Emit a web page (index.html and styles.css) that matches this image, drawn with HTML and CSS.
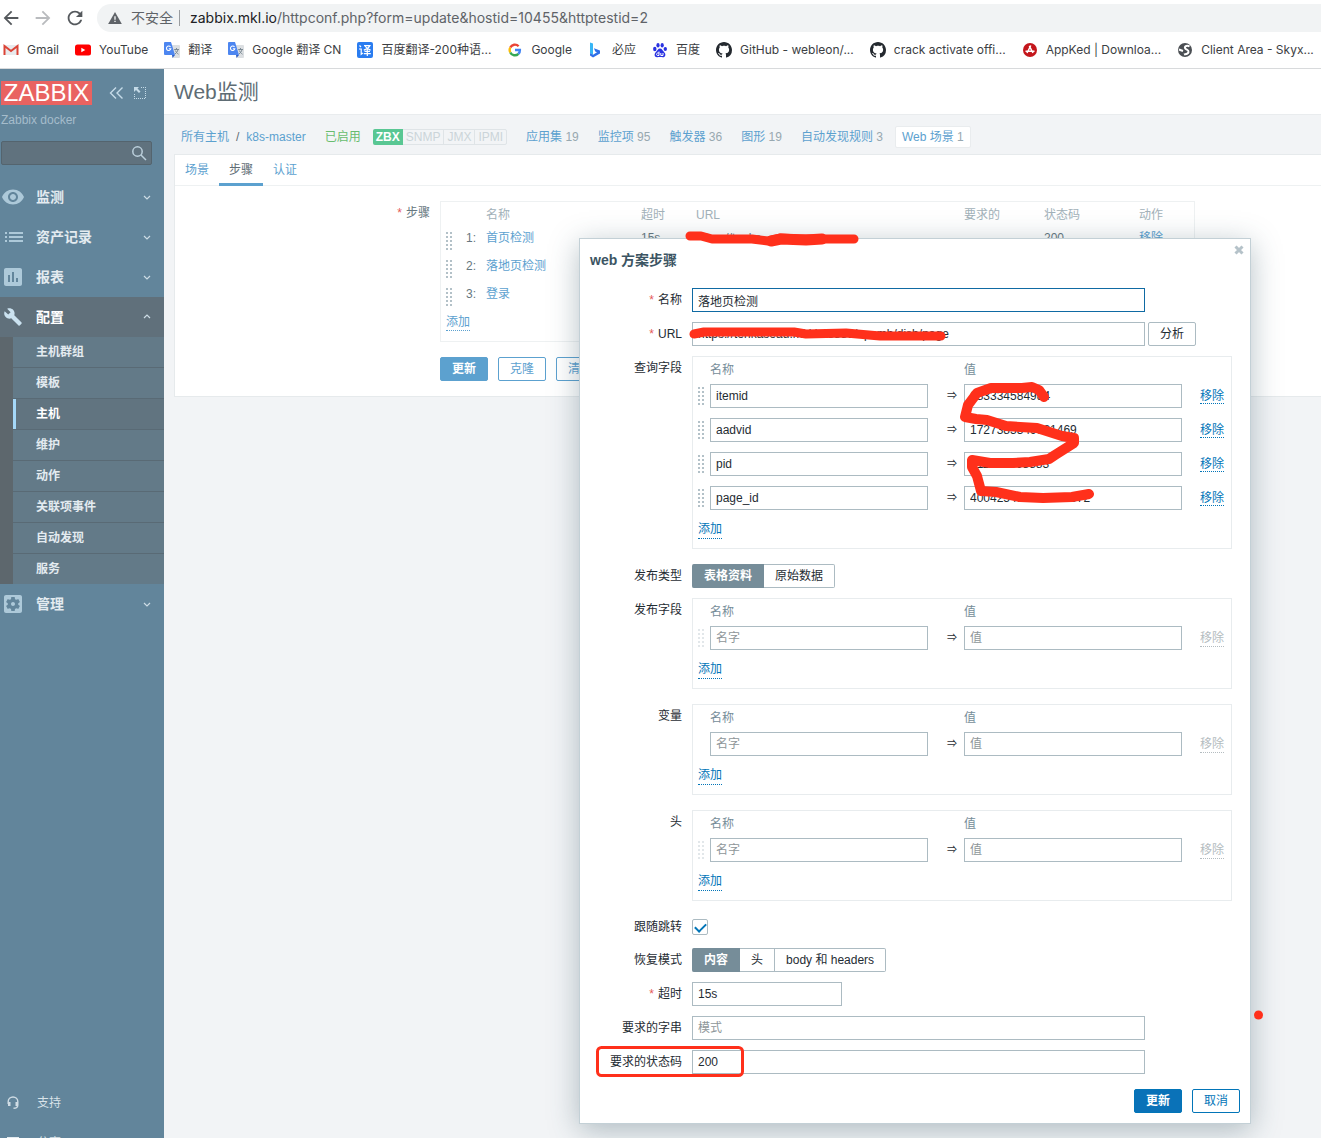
FILE: index.html
```html
<!DOCTYPE html>
<html lang="zh-CN">
<head>
<meta charset="utf-8">
<title>Web监测</title>
<link rel="stylesheet" href="styles.css">
</head>
<body>
<svg class="sprite" aria-hidden="true">
  <symbol id="chevron" viewBox="0 0 8 8"><path d="M1 3l3 3 3-3" fill="none" stroke="currentColor" stroke-width="1.2"/></symbol>
  <symbol id="github" viewBox="0 0 16 16"><path fill="#24292f" d="M8 0C3.58 0 0 3.58 0 8c0 3.54 2.29 6.53 5.47 7.59.4.07.55-.17.55-.38 0-.19-.01-.82-.01-1.49-2.01.37-2.53-.49-2.69-.94-.09-.23-.48-.94-.82-1.13-.28-.15-.68-.52-.01-.53.63-.01 1.08.58 1.23.82.72 1.21 1.87.87 2.33.66.07-.52.28-.87.51-1.07-1.78-.2-3.64-.89-3.64-3.95 0-.87.31-1.59.82-2.15-.08-.2-.36-1.02.08-2.12 0 0 .67-.21 2.2.82.64-.18 1.32-.27 2-.27s1.36.09 2 .27c1.53-1.04 2.2-.82 2.2-.82.44 1.1.16 1.92.08 2.12.51.56.82 1.27.82 2.15 0 3.07-1.87 3.75-3.65 3.95.29.25.54.73.54 1.48 0 1.07-.01 1.93-.01 2.2 0 .21.15.46.55.38A8.01 8.01 0 0 0 16 8c0-4.42-3.58-8-8-8z"/></symbol>
  <symbol id="gtranslate" viewBox="0 0 16 16"><path fill="#dcdfe2" d="M6 3h9a1 1 0 0 1 1 1v11a1 1 0 0 1-1 1H9z"/><path fill="#4d86f0" d="M1 0h6l4 13H1a1 1 0 0 1-1-1V1a1 1 0 0 1 1-1z"/><path fill="#2f5fc4" d="M8 13h3l-2.500 3z"/><path fill="none" stroke="#fff" stroke-width="1.1" d="M6.500 5A2.200 2.200 0 1 0 6.800 6.800H4.800"/><path fill="none" stroke="#7c8a94" d="M10.200 7.500H15M12.500 6v1.500M14 7.500c-.5 2-1.600 3.500-3 4.500M11.300 8.500c.8 1.800 1.800 2.800 3.200 3.700"/></symbol>
</svg>

<header class="browser">
  <div class="toolbar">
    <button class="nav-btn" aria-label="后退"><svg viewBox="0 0 24 24"><path d="M20 11H7.830l5.590-5.590L12 4l-8 8 8 8 1.410-1.410L7.830 13H20v-2z"/></svg></button>
    <button class="nav-btn nav-off" aria-label="前进"><svg viewBox="0 0 24 24"><path d="M4 11h12.170l-5.590-5.590L12 4l8 8-8 8-1.410-1.410L16.170 13H4v-2z"/></svg></button>
    <button class="nav-btn" aria-label="刷新"><svg viewBox="0 0 24 24"><path d="M17.650 6.350C16.200 4.900 14.210 4 12 4c-4.420 0-7.990 3.580-7.990 8s3.570 8 7.990 8c3.730 0 6.840-2.550 7.730-6h-2.080c-.82 2.330-3.040 4-5.650 4-3.310 0-6-2.690-6-6s2.690-6 6-6c1.660 0 3.140.69 4.220 1.780L13 11h7V4l-2.350 2.350z"/></svg></button>
    <div class="omnibox">
      <svg class="warn" viewBox="0 0 16 14"><path fill="#5f6368" d="M8 0l8 14H0z"/><path fill="#f1f3f4" d="M7.200 5h1.600v4H7.200zM7.200 10.200h1.600v1.600H7.200z"/></svg>
      <span class="insecure">不安全</span>
      <span class="url"><span class="host">zabbix.mkl.io</span>/httpconf.php?form=update&amp;hostid=10455&amp;httptestid=2</span>
    </div>
  </div>
  <nav class="bookmarks">
    <a href="#"><svg viewBox="0 0 16 16"><path fill="#e8eaed" d="M1 3h14v10H1z"/><path fill="none" stroke="#db4437" stroke-width="2" d="M1.500 13V4L8 9l6.500-5v9"/></svg>Gmail</a>
    <a href="#"><svg viewBox="0 0 16 16"><rect y="2.500" width="16" height="11" rx="2.500" fill="#f00"/><path fill="#fff" d="M6.300 5.700v4.600l4-2.300z"/></svg>YouTube</a>
    <a href="#"><svg><use href="#gtranslate"/></svg>翻译</a>
    <a href="#"><svg><use href="#gtranslate"/></svg>Google 翻译 CN</a>
    <a href="#"><svg viewBox="0 0 16 16"><rect width="16" height="16" rx="2" fill="#2a7cf0"/><path fill="none" stroke="#fff" stroke-width="1.200" d="M2.500 3.500l1.500 1.500M2 7h2.200v5.300l1.600-1.300M7 3.600h6c-1.300 2.600-3.200 3.800-6.200 4.500M8.200 4.200c1.200 2 2.800 3.200 5.400 3.900M10.300 7.500v6.500M7.500 9.300H13M6.800 11.600h7"/></svg>百度翻译-200种语...</a>
    <a href="#"><svg viewBox="0 0 16 16"><g fill="none" stroke-width="2.400"><path stroke="#ea4335" d="M3.300 5.600a5 5 0 0 1 8.300-1.300"/><path stroke="#fbbc05" d="M3.300 10.400a5 5 0 0 1 0-4.800"/><path stroke="#34a853" d="M11.400 11.800a5 5 0 0 1-8.100-1.400"/><path stroke="#4285f4" d="M8 8h4.900a5 5 0 0 1-1.500 3.800"/></g></svg>Google</a>
    <a href="#"><svg viewBox="0 0 16 16"><path fill="#37b6f5" d="M2 .5l3 1V13l-3-2z"/><path fill="#2f6fe8" d="M2 11l3 1.700 4-2.400-1.800-.9L6 6.200l6 2.200v3L5 15.500 2 13.600z"/></svg>必应</a>
    <a href="#"><svg viewBox="0 0 16 16"><g fill="#2932e1"><ellipse cx="2.800" cy="7" rx="1.700" ry="2.200"/><ellipse cx="6" cy="3.200" rx="1.600" ry="2.200"/><ellipse cx="10.200" cy="3.200" rx="1.600" ry="2.200"/><ellipse cx="13.300" cy="7" rx="1.700" ry="2.100"/><path d="M8 6.500c2 0 2.500 2 4 3.400 2.700 2.500 1 5.600-1.200 5.300-2-.3-3.600-.3-5.600 0C2.800 15.500 1.500 12.300 4 10c1.500-1.400 2-3.500 4-3.500z"/></g><path fill="none" stroke="#fff" d="M7 9.500v4M7 11H5.500c-1.200.3-1.200 2.500 0 2.500H7M8.800 11v2.500h2.200V11"/></svg>百度</a>
    <a href="#"><svg><use href="#github"/></svg>GitHub - webleon/...</a>
    <a href="#"><svg><use href="#github"/></svg>crack activate offi...</a>
    <a href="#"><svg viewBox="0 0 16 16"><circle cx="8" cy="8" r="7" fill="#c4161c"/><path fill="none" stroke="#fff" stroke-width="1.500" d="M8.800 3.500L5 11M7.300 3.800L11 11M3.500 9.200h9"/></svg>AppKed | Downloa...</a>
    <a href="#"><svg viewBox="0 0 16 16"><circle cx="8" cy="8" r="7" fill="#4b4f54"/><path fill="none" stroke="#fff" stroke-width="2" d="M12.500 4.500C10.500 3 7.500 4 8 6s4 1.500 3.500 4-3.500 2-4.500 2.500M2 7.500l4 1.500"/></svg>Client Area - Skyx...</a>
  </nav>
</header>

<div class="app">
  <aside class="sidebar">
    <div class="brand">
      <a class="logo" href="#">ZABBIX</a>
      <button class="icon-btn" aria-label="收起"><svg width="16" height="16" viewBox="0 0 16 16"><path fill="none" stroke="#c5dbe8" stroke-width="1.400" d="M8 2.500L2.500 8 8 13.500M14.500 2.500L9 8l5.500 5.500"/></svg></button>
      <button class="icon-btn" aria-label="隐藏"><svg width="14" height="14" viewBox="0 0 14 14"><path fill="#c5dbe8" d="M1 1h5L4.500 2.500l3 3-1.500 1.500-3-3L1 6z"/><path fill="none" stroke="#c5dbe8" stroke-dasharray="1 1" d="M8 1.500h5M12.500 3v10M1.500 8v5M3 12.500h9"/></svg></button>
    </div>
    <div class="server">Zabbix docker</div>
    <div class="search"><input type="text" aria-label="搜索"><svg width="16" height="16" viewBox="0 0 16 16"><g fill="none" stroke="#bcd0dc" stroke-width="1.500"><circle cx="6.500" cy="6.500" r="4.700"/><path d="M10 10l5 5"/></g></svg></div>
    <nav>
      <ul class="menu">
        <li><a href="#"><svg class="mi" viewBox="0 0 24 24"><path d="M12 4.500C7 4.500 2.730 7.610 1 12c1.730 4.390 6 7.500 11 7.500s9.270-3.110 11-7.500c-1.730-4.390-6-7.500-11-7.500zM12 17c-2.760 0-5-2.240-5-5s2.240-5 5-5 5 2.240 5 5-2.240 5-5 5zm0-8c-1.660 0-3 1.340-3 3s1.340 3 3 3 3-1.340 3-3-1.340-3-3-3z"/></svg>监测<svg class="chev"><use href="#chevron"/></svg></a></li>
        <li><a href="#"><svg class="mi" viewBox="0 0 24 24"><path d="M4 7h2v2H4zM8 7h14v2H8zM4 11h2v2H4zM8 11h14v2H8zM4 15h2v2H4zM8 15h14v2H8z"/></svg>资产记录<svg class="chev"><use href="#chevron"/></svg></a></li>
        <li><a href="#"><svg class="mi" viewBox="0 0 24 24"><path d="M19 3H5c-1.100 0-2 .9-2 2v14c0 1.100.9 2 2 2h14c1.100 0 2-.9 2-2V5c0-1.100-.9-2-2-2zM9 17H7v-7h2v7zm4 0h-2V7h2v10zm4 0h-2v-4h2v4z"/></svg>报表<svg class="chev"><use href="#chevron"/></svg></a></li>
        <li class="open"><a href="#"><svg class="mi" viewBox="-3 -3 30 30"><path d="M22.700 19l-9.100-9.100c.9-2.300.4-5-1.500-6.900-2-2-5-2.400-7.400-1.300L9 6 6 9 1.600 4.700C.4 7.100.9 10.100 2.900 12.100c1.900 1.900 4.600 2.400 6.900 1.500l9.100 9.100c.4.4 1 .4 1.400 0l2.300-2.300c.5-.4.5-1.100.1-1.400z"/></svg>配置<svg class="chev up"><use href="#chevron"/></svg></a>
          <ul class="submenu">
            <li><a href="#">主机群组</a></li>
            <li><a href="#">模板</a></li>
            <li class="current"><a href="#">主机</a></li>
            <li><a href="#">维护</a></li>
            <li><a href="#">动作</a></li>
            <li><a href="#">关联项事件</a></li>
            <li><a href="#">自动发现</a></li>
            <li><a href="#">服务</a></li>
          </ul>
        </li>
        <li><a href="#"><svg class="mi" viewBox="0 0 24 24"><path fill-rule="evenodd" d="M12 10c-1.100 0-2 .9-2 2s.9 2 2 2 2-.9 2-2-.9-2-2-2zm7-7H5c-1.110 0-2 .9-2 2v14c0 1.100.89 2 2 2h14c1.110 0 2-.9 2-2V5c0-1.100-.89-2-2-2zm-1.750 9c0 .23-.02.46-.05.68l1.480 1.160c.13.11.17.3.08.45l-1.400 2.420c-.09.15-.27.21-.43.15l-1.740-.7c-.36.28-.76.51-1.180.69l-.26 1.850c-.03.17-.18.3-.35.3h-2.800c-.17 0-.32-.13-.35-.29l-.26-1.850c-.43-.18-.82-.41-1.180-.69l-1.740.7c-.16.06-.34 0-.43-.15l-1.400-2.420c-.09-.15-.05-.34.08-.45l1.480-1.160c-.03-.23-.05-.46-.05-.69 0-.23.02-.46.05-.68l-1.480-1.160c-.13-.11-.17-.3-.08-.45l1.400-2.420c.09-.15.27-.21.43-.15l1.740.7c.36-.28.76-.51 1.180-.69l.26-1.850c.03-.17.18-.3.35-.3h2.800c.17 0 .32.13.35.29l.26 1.850c.43.18.82.41 1.180.69l1.740-.7c.16-.06.34 0 .43.15l1.400 2.420c.09.15.05.34-.08.45l-1.480 1.160c.03.23.05.46.05.69z"/></svg>管理<svg class="chev"><use href="#chevron"/></svg></a></li>
      </ul>
    </nav>
    <nav class="foot">
      <a href="#"><svg width="12" height="14" viewBox="0 0 12 14"><path fill="none" stroke="#cfdce4" stroke-width="1.400" d="M1.200 8V5.500a4.800 4.500 0 0 1 9.600 0V9c0 2-1.500 3.300-4.300 3.300"/><path fill="#cfdce4" d="M1 6h2.500v4H1zM8.500 6H11v4H8.500z"/></svg>支持</a>
      <a href="#"><svg width="12" height="12" viewBox="0 0 12 12"><path fill="#e3ebf0" d="M0 0h12v12H0z"/></svg>分享</a>
    </nav>
  </aside>

  <main class="main">
    <h1 class="page-title">Web监测</h1>
    <nav class="crumbs">
      <span class="path"><a href="#">所有主机</a><span>/</span><a href="#">k8s-master</a></span>
      <span class="enabled">已启用</span>
      <span class="tags"><span class="tag on">ZBX</span><span class="tag">SNMP</span><span class="tag">JMX</span><span class="tag">IPMI</span></span>
      <span><a href="#">应用集</a> 19</span>
      <span><a href="#">监控项</a> 95</span>
      <span><a href="#">触发器</a> 36</span>
      <span><a href="#">图形</a> 19</span>
      <span><a href="#">自动发现规则</a> 3</span>
      <span class="here"><a href="#">Web 场景</a> 1</span>
    </nav>
    <section class="panel">
      <nav class="tabs"><a href="#">场景</a><a class="active" href="#">步骤</a><a href="#">认证</a></nav>
      <div class="steps-form">
        <div class="steps-label"><span class="req">*</span>步骤</div>
        <div class="steps-box">
          <table class="steps">
            <colgroup><col class="c-drag"><col class="c-num"><col class="c-name"><col class="c-time"><col class="c-url"><col class="c-need"><col class="c-code"><col></colgroup>
            <thead><tr><th></th><th></th><th>名称</th><th>超时</th><th>URL</th><th>要求的</th><th>状态码</th><th>动作</th></tr></thead>
            <tbody>
              <tr><td><span class="grip"></span></td><td class="num">1:</td><td><a href="#">首页检测</a></td><td>15s</td><td>https://tenka</td><td></td><td>200</td><td><a class="dotted" href="#">移除</a></td></tr>
              <tr><td><span class="grip"></span></td><td class="num">2:</td><td><a href="#">落地页检测</a></td><td></td><td></td><td></td><td></td><td></td></tr>
              <tr><td><span class="grip"></span></td><td class="num">3:</td><td><a href="#">登录</a></td><td></td><td></td><td></td><td></td><td></td></tr>
            </tbody>
          </table>
          <a class="dotted add" href="#">添加</a>
        </div>
        <div class="actions">
          <button class="btn solid">更新</button><button class="btn">克隆</button><button class="btn">清除</button>
        </div>
      </div>
    </section>
  </main>
</div>

<div class="dialog" role="dialog" aria-labelledby="dlg-title">
  <button class="close" aria-label="关闭"><svg width="10" height="10" viewBox="0 0 10 10"><path stroke="currentColor" stroke-width="3" d="M1.500 1.500l7 7M8.500 1.500l-7 7"/></svg></button>
  <h2 id="dlg-title">web 方案步骤</h2>
  <form class="form">
    <label for="name"><span class="req">*</span>名称</label>
    <div><input id="name" class="wide focus" type="text" value="落地页检测"></div>

    <label for="url"><span class="req">*</span>URL</label>
    <div class="inline"><input id="url" class="wide" type="text" value="https://tenkaseau.mkl.io/8888/opsmb/dish/page"><button type="button" class="parse">分析</button></div>

    <div class="lbl">查询字段</div>
    <div class="pairs">
      <table>
        <thead><tr><th class="p-drag"></th><th class="p-in">名称</th><th class="p-arrow"></th><th class="p-in">值</th><th></th></tr></thead>
        <tbody>
          <tr><td><span class="grip"></span></td><td><input type="text" aria-label="名称" value="itemid"></td><td class="arrow">⇒</td><td><input type="text" aria-label="值" value="683334584984"></td><td class="rm"><a class="dotted" href="#">移除</a></td></tr>
          <tr><td><span class="grip"></span></td><td><input type="text" aria-label="名称" value="aadvid"></td><td class="arrow">⇒</td><td><input type="text" aria-label="值" value="1727383349981469"></td><td class="rm"><a class="dotted" href="#">移除</a></td></tr>
          <tr><td><span class="grip"></span></td><td><input type="text" aria-label="名称" value="pid"></td><td class="arrow">⇒</td><td><input type="text" aria-label="值" value="411988868883"></td><td class="rm"><a class="dotted" href="#">移除</a></td></tr>
          <tr><td><span class="grip"></span></td><td><input type="text" aria-label="名称" value="page_id"></td><td class="arrow">⇒</td><td><input type="text" aria-label="值" value="400425483158538872"></td><td class="rm"><a class="dotted" href="#">移除</a></td></tr>
        </tbody>
      </table>
      <a class="dotted add" href="#">添加</a>
    </div>

    <div class="lbl">发布类型</div>
    <div class="seg">
      <input type="radio" name="post" id="post-form" checked><label for="post-form">表格资料</label>
      <input type="radio" name="post" id="post-raw"><label for="post-raw">原始数据</label>
    </div>

    <div class="lbl">发布字段</div>
    <div class="pairs">
      <table>
        <thead><tr><th class="p-drag"></th><th class="p-in">名称</th><th class="p-arrow"></th><th class="p-in">值</th><th></th></tr></thead>
        <tbody><tr><td><span class="grip faint"></span></td><td><input type="text" aria-label="名称" placeholder="名字"></td><td class="arrow">⇒</td><td><input type="text" aria-label="值" placeholder="值"></td><td class="rm"><button type="button" class="dotted" disabled>移除</button></td></tr></tbody>
      </table>
      <a class="dotted add" href="#">添加</a>
    </div>

    <div class="lbl">变量</div>
    <div class="pairs">
      <table>
        <thead><tr><th class="p-drag"></th><th class="p-in">名称</th><th class="p-arrow"></th><th class="p-in">值</th><th></th></tr></thead>
        <tbody><tr><td></td><td><input type="text" aria-label="名称" placeholder="名字"></td><td class="arrow">⇒</td><td><input type="text" aria-label="值" placeholder="值"></td><td class="rm"><button type="button" class="dotted" disabled>移除</button></td></tr></tbody>
      </table>
      <a class="dotted add" href="#">添加</a>
    </div>

    <div class="lbl">头</div>
    <div class="pairs">
      <table>
        <thead><tr><th class="p-drag"></th><th class="p-in">名称</th><th class="p-arrow"></th><th class="p-in">值</th><th></th></tr></thead>
        <tbody><tr><td><span class="grip faint"></span></td><td><input type="text" aria-label="名称" placeholder="名字"></td><td class="arrow">⇒</td><td><input type="text" aria-label="值" placeholder="值"></td><td class="rm"><button type="button" class="dotted" disabled>移除</button></td></tr></tbody>
      </table>
      <a class="dotted add" href="#">添加</a>
    </div>

    <label class="check-label" for="follow">跟随跳转</label>
    <div class="check"><input id="follow" type="checkbox" checked></div>

    <div class="lbl">恢复模式</div>
    <div class="seg">
      <input type="radio" name="mode" id="mode-body" checked><label for="mode-body">内容</label>
      <input type="radio" name="mode" id="mode-head"><label for="mode-head">头</label>
      <input type="radio" name="mode" id="mode-both"><label for="mode-both">body 和 headers</label>
    </div>

    <label for="timeout"><span class="req">*</span>超时</label>
    <div><input id="timeout" class="short" type="text" value="15s"></div>

    <label for="required">要求的字串</label>
    <div><input id="required" class="wide" type="text" placeholder="模式"></div>

    <label for="codes">要求的状态码</label>
    <div><input id="codes" class="wide" type="text" value="200"></div>
  </form>
  <div class="dialog-foot"><button class="btn solid">更新</button><button class="btn">取消</button></div>

  <svg class="marks" viewBox="579 238 672 887" preserveAspectRatio="xMinYMin meet" aria-hidden="true">
    <g fill="none" stroke="#ff301b" stroke-width="10" stroke-linecap="round" stroke-linejoin="round">
      <path stroke-width="9" d="M690 236L701 236L712 239L752 239L768 241L780 238L800 239L822 239L854 239"/>
      <path stroke-width="11" d="M771 241L781 239L806 240L822 239"/>
      <path stroke-width="9" d="M694 334L704 332L724 332L794 332L806 334L846 333L880 336L941 336"/>
      <path d="M1044 397L1039 390L1032 387L1022 388L991 388L977 393L968 405L965 417L976 419L987 420L1006 426L1037 428L1062 436L1074 438L1074 443L1055 455L1049 459L1030 462L1013 463L990 463L972 460L972 467L977 476L981 491L996 492L1020 497L1043 498L1072 497L1089 494"/>
    </g>
    <rect x="597.500" y="1047.500" width="145" height="28" rx="4" fill="none" stroke="#ff301b" stroke-width="3"/>
    <circle cx="1258.500" cy="1015" r="4.500" fill="#ff301b"/>
  </svg>
</div>
</body>
</html>
```
FILE: styles.css
```css
* { box-sizing: border-box; }
body {
  margin: 0;
  height: 100vh;
  display: flex;
  flex-direction: column;
  position: relative;
  overflow: hidden;
  background: #f2f4f6;
  color: #1f2c33;
  font: 12px/16px "Liberation Sans", "Noto Sans CJK SC", sans-serif;
}
a { color: #5ca1cf; text-decoration: none; }
button, input { font: inherit; color: inherit; }
button { cursor: pointer; padding: 0; background: none; border: 0; }
ul { list-style: none; margin: 0; padding: 0; }
.sprite { display: none; }

/* browser chrome */
.browser {
  flex: none;
  background: #fff;
  border-bottom: 1px solid #d8dadc;
  padding-top: 4px;
  font-family: Inter, "Noto Sans CJK SC", sans-serif;
}
.toolbar { display: flex; align-items: center; height: 28px; }
.nav-btn { width: 32px; height: 22px; flex: none; text-align: left; }
.nav-btn svg { display: block; width: 22px; height: 22px; fill: #55595d; }
.nav-off svg { fill: #b9bbbe; }
.omnibox {
  flex: 1;
  min-width: 0;
  height: 28px;
  margin-left: 1px;
  padding-left: 11px;
  display: flex;
  align-items: center;
  background: #f1f3f4;
  border-radius: 14px 0 0 14px;
  font-size: 14px;
  white-space: nowrap;
}
.warn { width: 14px; height: 12px; margin-right: 9px; }
.insecure { color: #5f6368; padding-right: 6px; border-right: 1px solid #9a9da0; margin-right: 10px; }
.url { color: #5f6368; }
.host { color: #202124; }
.bookmarks {
  display: flex;
  gap: 16px;
  height: 36px;
  align-items: center;
  padding-left: 3px;
  white-space: nowrap;
}
.bookmarks a { display: flex; gap: 8px; align-items: center; color: #3c4043; }
.bookmarks svg { width: 16px; height: 16px; flex: none; }

/* application shell */
.app { flex: 1; min-height: 0; display: flex; }
.sidebar {
  width: 164px;
  flex: none;
  overflow: hidden;
  display: flex;
  flex-direction: column;
  background: #62859b;
  padding-top: 12px;
}
.brand { display: flex; align-items: center; height: 24px; padding-left: 1px; }
.logo {
  width: 91px;
  height: 24px;
  margin-right: 16px;
  background: #e96361;
  color: #fff;
  font-size: 24px;
  line-height: 24px;
  text-align: center;
}
.icon-btn { margin-right: 9px; height: 16px; }
.icon-btn svg { display: block; }
.server { color: #a5bccb; padding: 7px 0 13px 1px; }
.search {
  display: flex;
  align-items: center;
  height: 24px;
  margin: 0 12px 12px 1px;
  padding-right: 4px;
  background: #60727e;
  border: 1px solid #54646e;
  border-radius: 2px;
}
.search input { flex: 1; min-width: 0; border: 0; background: none; outline: 0; }
.menu > li > a {
  display: flex;
  align-items: center;
  height: 40px;
  padding: 0 13px 0 1px;
  font-size: 14px;
  font-weight: 700;
  color: #e3ebf0;
}
.mi { width: 24px; height: 24px; margin-right: 11px; fill: #adc9d9; }
.chev { width: 8px; height: 8px; margin-left: auto; color: #cddce5; }
.chev.up { transform: rotate(180deg); }
.menu > .open > a { background: #60707b; color: #fff; }
.open .mi { fill: #cbe2f0; }
.submenu { border-left: 13px solid #5d676d; }
.submenu li { background: #637a88; border-bottom: 1px solid #596a75; }
.submenu li:last-child { border-bottom: 0; }
.submenu a {
  display: block;
  padding: 7px 0 7px 23px;
  color: #e3ebf0;
  font-weight: 700;
}
.submenu .current { background: #617480; }
.submenu .current a { border-left: 3px solid #a5d8f8; padding-left: 20px; color: #fff; }
.foot { margin-top: auto; margin-bottom: -25px; }
.foot a {
  display: flex;
  align-items: center;
  gap: 18px;
  height: 40px;
  padding-left: 7px;
  color: #d9e3e9;
}

/* page behind the dialog */
.main { flex: 1; min-width: 0; }
.page-title {
  margin: 0;
  padding: 0 10px;
  background: #fff;
  border-bottom: 1px solid #e9ecee;
  font-size: 21px;
  line-height: 45px;
  font-weight: 400;
  color: #5e6c74;
}
.crumbs {
  display: flex;
  align-items: center;
  gap: 19px;
  height: 39px;
  padding: 4px 0 0 17px;
  color: #98a8b0;
  white-space: nowrap;
}
.path { display: flex; gap: 7px; color: #5e6c74; }
.enabled { color: #68bd6f; }
.tags { display: flex; margin-left: -7px; border: 1px solid #dfe4e7; border-radius: 2px; }
.tag { padding: 0 3px; line-height: 14px; color: #cbd4d9; border-right: 1px solid #dfe4e7; }
.tag:last-child { border-right: 0; }
.tag.on { margin: -1px 0 -1px -1px; line-height: 16px; background: #59c793; color: #fff; font-weight: 700; border: 0; border-radius: 2px 0 0 2px; }
.here { background: #fff; border: 1px solid #e9ecee; border-radius: 2px; padding: 2px 6px; margin-left: -7px; }
.panel { margin-left: 10px; background: #fff; border: 1px solid #e6eaec; border-right: 0; }
.tabs { display: flex; border-bottom: 1px solid #eef1f2; height: 31px; }
.tabs a { height: 31px; padding: 7px 10px 5px; border-bottom: 3px solid transparent; }
.tabs .active { color: #5e6c74; border-color: #5ca1cf; }
.steps-form {
  display: grid;
  grid-template-columns: 255px 755px;
  column-gap: 10px;
  padding: 15px 0;
  color: #667780;
}
.steps-label { text-align: right; padding-top: 4px; }
.req { color: #e45959; margin-right: 4px; }
.steps-box { border: 1px solid #eef1f2; padding-bottom: 10px; }
.steps { width: 100%; table-layout: fixed; border-collapse: collapse; }
.steps th { height: 22px; padding: 4px 0 0; text-align: left; font-weight: 400; color: #a2b1b9; }
.steps td { height: 28px; padding: 6px 0; vertical-align: top; }
.steps .num { text-align: right; padding-right: 10px; }
.c-drag { width: 17px; } .c-num { width: 28px; } .c-name { width: 155px; } .c-time { width: 55px; }
.c-url { width: 268px; } .c-need { width: 80px; } .c-code { width: 95px; }
.grip {
  display: block;
  width: 6px;
  height: 18px;
  margin-left: 5px;
  color: #b3c1c8;
  background: repeating-linear-gradient(transparent 0 2px, #fff 2px 4px), repeating-linear-gradient(90deg, currentColor 0 2px, #fff 2px 4px);
}
.steps .grip { margin-top: 2px; margin-bottom: -4px; }
.grip.faint { color: #e2e7ea; }
.dotted { border-bottom: 1px dotted currentColor; }
.add { display: inline-block; margin: 6px 0 0 5px; }
.actions { grid-column: 2; display: flex; gap: 10px; margin-top: 15px; }
.btn {
  height: 24px;
  padding: 0 11px;
  border: 1px solid #5ca1cf;
  border-radius: 2px;
  background: #fff;
  color: #5ca1cf;
}
.btn.solid { background: #5ca1cf; color: #fff; font-weight: 700; }

/* step dialog */
.dialog {
  position: absolute;
  top: 238px;
  right: 70px;
  width: 672px;
  padding: 13px 10px 10px;
  background: #fff;
  border: 1px solid #c3d0d6;
  box-shadow: 0 6px 28px rgba(52, 82, 96, .36);
}
.dialog h2 { margin: 0 0 20px; font-size: 14px; line-height: 16px; color: #3c5563; }
.dialog a { color: #0275b8; }
.close { position: absolute; top: 6px; right: 6px; color: #b5c2c9; }
.close svg { display: block; }
.form {
  display: grid;
  grid-template-columns: 92px 540px;
  gap: 10px;
}
.form > label, .lbl { text-align: right; line-height: 24px; }
.form input[type="text"] {
  display: block;
  width: 100%;
  height: 24px;
  padding: 0 5px;
  background: #fff;
  border: 1px solid #acbbc2;
  border-radius: 0;
  outline: 0;
}
.form ::placeholder { color: #8e9699; opacity: 1; }
.form input.wide { width: 453px; }
.form input.short { width: 150px; }
.form input.focus { border-color: #0f6aa3; }
.inline { display: flex; gap: 3px; }
.parse { width: 48px; height: 24px; border: 1px solid #acbbc2; border-radius: 2px; background: #fff; }
.pairs { border: 1px solid #e8ecee; padding-bottom: 9px; margin-bottom: 5px; }
.pairs table { width: 100%; table-layout: fixed; border-collapse: collapse; }
.pairs th { height: 27px; padding: 0 0 2px; text-align: left; font-weight: 400; color: #768d99; }
.pairs td { height: 34px; padding: 0 0 10px; }
.p-drag { width: 17px; } .p-in { width: 218px; } .p-arrow { width: 36px; }
.pairs .arrow { text-align: right; padding-right: 7px; font-size: 10px; }
.pairs .rm { padding-left: 18px; }
.pairs .dotted { line-height: 17px; }
.pairs .add { margin-top: 0; line-height: 18px; }
.pairs button:disabled { color: #b4bcc0; line-height: 16px; }
.seg { display: flex; height: 24px; position: relative; }
.seg input { position: absolute; opacity: 0; margin: 0; }
.seg label { padding: 0 11px; line-height: 22px; border: 1px solid #acbbc2; border-left-width: 0; }
.seg label:last-child { border-radius: 0 2px 2px 0; }
.seg input:checked + label { background: #768d99; border-color: #768d99; color: #fff; font-weight: 700; padding-left: 12px; border-radius: 2px 0 0 2px; }
.form .check-label { line-height: 22px; }
.check { display: flex; align-items: center; height: 22px; }
.check input {
  appearance: none;
  display: grid;
  place-items: center;
  width: 16px;
  height: 16px;
  margin: 0;
  border: 1px solid #acbbc2;
  border-radius: 2px;
}
.check input:checked::before {
  content: "";
  width: 9px;
  height: 5px;
  border: solid #0275b8;
  border-width: 0 0 2px 2px;
  transform: translateY(-1px) rotate(-45deg);
}
.dialog-foot { display: flex; justify-content: flex-end; gap: 10px; margin-top: 15px; }
.dialog-foot .btn { border-color: #0275b8; color: #0275b8; }
.dialog-foot .solid { background: #0a72b8; color: #fff; }
.marks { position: absolute; top: -1px; left: -1px; width: 672px; height: 887px; overflow: visible; pointer-events: none; }
```
